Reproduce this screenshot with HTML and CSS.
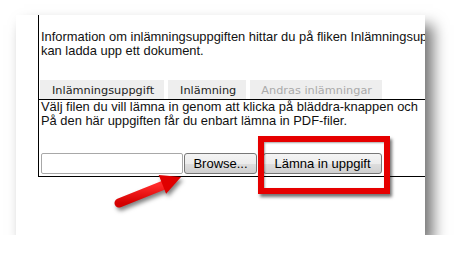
FILE: index.html
```html
<!DOCTYPE html>
<html>
<head>
<meta charset="utf-8">
<title>Lämna in uppgift</title>
<link rel="stylesheet" href="styles.css">
</head>
<body>

<div class="card">
	<div class="box">
		<p class="intro">Information om inlämningsuppgiften hittar du på fliken Inlämningsuppgift där du<br>kan ladda upp ett dokument.</p>
		<div class="tabs">
			<span class="tab">Inlämningsuppgift</span>
			<span class="tab">Inlämning</span>
			<span class="tab tab-off">Andras inlämningar</span>
		</div>
		<div class="panel">
			<p>Välj filen du vill lämna in genom att klicka på bläddra-knappen och<br>På den här uppgiften får du enbart lämna in PDF-filer.</p>
			<div class="upload">
				<input class="file-name" type="text">
				<button class="btn btn-browse">Browse...</button>
				<button class="btn btn-submit">Lämna in uppgift</button>
			</div>
		</div>
	</div>
	<div class="highlight"></div>
	<svg class="arrow" width="90" height="50" viewBox="105 165 90 50">
		<defs>
			<linearGradient id="red" x1="0" y1="0" x2="0" y2="1">
				<stop offset="0" stop-color="#ff2a2a"/>
				<stop offset="1" stop-color="#d40000"/>
			</linearGradient>
		</defs>
		<line x1="119" y1="203" x2="164" y2="185" stroke="url(#red)" stroke-width="9" stroke-linecap="round"/>
		<polygon points="181,177 158.7,175.1 166.1,193.7" fill="#e00000"/>
	</svg>
</div>

</body>
</html>
```

FILE: styles.css
```css
body {
	margin: 0px;
	background-color: #fff;
	font-family: "Liberation Sans", Arial, sans-serif;
	color: #111;
}
.card {
	position: relative;
	box-sizing: border-box;
	margin: 15px 0 0 16px;
	width: 409px;
	height: 220px;
	padding-left: 22px;
	background-color: #fff;
	overflow: hidden;
	box-shadow: 8px 10px 14px rgba(0, 0, 0, 0.55);
}
.box {
	width: 600px;
	padding: 15px 0 2px 2px;
	border-left: 1px solid #000;
	border-bottom: 1px solid #000;
	white-space: nowrap;
	font-size: 12.9px;
	line-height: 13.5px;
}
.box p {
	margin: 0;
}
.tabs {
	display: flex;
	gap: 4px;
	margin: 23px 0 0 -1px;
	font-family: "DejaVu Sans", Verdana, sans-serif;
	font-size: 11.3px;
}
.tab {
	padding: 2px 10px 0 12px;
	line-height: 17px;
	background-color: #eeeeee;
	color: #222;
}
.tab-off {
	color: #aaa;
	padding-left: 11px;
}
.panel {
	margin-left: -2px;
	padding-left: 2px;
	border-top: 1px solid #000;
}
.upload {
	display: flex;
	margin-top: 26px;
}
.file-name {
	box-sizing: border-box;
	width: 142px;
	height: 21px;
	margin: 0;
	border: 1px solid #a8a8a8;
	border-radius: 2px;
	background-color: #fff;
}
.btn {
	box-sizing: border-box;
	height: 21px;
	padding: 0;
	border: 1px solid #777;
	border-radius: 3px;
	background: linear-gradient(#f4f4f4, #ececec 50%, #dedede 51%, #d0d0d0);
	font-family: "Liberation Sans", Arial, sans-serif;
	font-size: 13px;
	color: #000;
}
.btn-browse {
	width: 73px;
	margin-left: 1px;
}
.btn-submit {
	width: 119px;
	margin-left: 6px;
}
.highlight {
	position: absolute;
	left: 242px;
	top: 121px;
	width: 132px;
	height: 58px;
	box-sizing: border-box;
	border: 6px solid #e60000;
	box-shadow: 2px 3px 3px rgba(0, 0, 0, 0.55), inset 1px 1px 2px rgba(0, 0, 0, 0.35);
}
.arrow {
	position: absolute;
	left: 89px;
	top: 150px;
	filter: drop-shadow(2px 3px 2px rgba(0, 0, 0, 0.5));
}
```
